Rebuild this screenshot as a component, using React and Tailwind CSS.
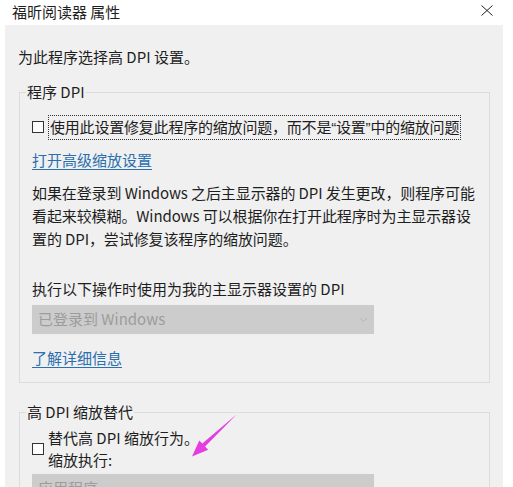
import React from "react";

const font = { fontFamily: '"Noto Sans CJK SC", "Noto Sans", sans-serif' };

// small greyed chevron used on the disabled dropdowns
const Chevron = () => (
  <svg width="9" height="6" viewBox="0 0 9 6" className="mr-[6px]">
    <path d="M1 1 L4.5 4.5 L8 1" fill="none" stroke="#b4b4b4" strokeWidth="1" />
  </svg>
);

const Select = ({ label, className = "" }) => (
  <div
    className={
      "w-[342px] h-[29px] bg-[#cccccc] flex items-center justify-between pl-[6px] text-[15px] text-[#9c9c9c] " +
      className
    }>
    <span>{label}</span>
    <Chevron />
  </div>
);

const CheckBox = () => (
  <span className="inline-block w-[12px] h-[12px] border border-[#333] bg-white shrink-0" />
);

const Group = ({ title, className = "", children }) => (
  <fieldset
    className={
      "w-[471px] ml-[14px] border border-[#dcdcdc] px-[12px] " + className
    }>
    <legend className="-ml-[6px] px-[1px] leading-[20px] text-[15px] text-[#1e1e1e]">
      {title}
    </legend>
    {children}
  </fieldset>
);

// curly quotes render half-width in the dialog font
const Q = ({ children }) => (
  <span style={{ fontFamily: '"Liberation Sans", sans-serif' }}>{children}</span>
);

export default function App() {
  return (
    <div
      className="relative w-[513px] h-[487px] bg-white overflow-hidden flex flex-col text-[#1e1e1e]"
      style={font}>
      {/* title bar */}
      <div className="h-[25px] flex items-center justify-between pl-[12px] pr-[20px] shrink-0">
        <span className="text-[15px] leading-[20px] -mt-[2px]">福昕阅读器 属性</span>
        <svg width="12" height="11" viewBox="0 0 12 11" className="-mt-[4px]">
          <path d="M0.5 0.5 L11.5 10.5 M11.5 0.5 L0.5 10.5" stroke="#222" strokeWidth="1" />
        </svg>
      </div>

      {/* dialog body */}
      <div className="ml-[5px] w-[498px] flex-1 bg-[#f0f0f0] pt-[21px]">
        <div className="pl-[13px] text-[15px] leading-[22px]">为此程序选择高 DPI 设置。</div>

        <Group title="程序 DPI" className="mt-[14px] pt-[13px] pb-[13px]">
          <div className="flex items-center h-[24px]">
            <CheckBox />
            <span className="ml-[4px] px-[1px] border border-dotted border-[#333] leading-[22px] text-[15px] whitespace-nowrap tracking-[-0.2px]">
              使用此设置修复此程序的缩放问题，而不是<Q>“</Q>设置<Q>”</Q>中的缩放问题
            </span>
          </div>
          <div className="mt-[10px] leading-[22px] text-[15px] text-[#2a6fae] underline underline-offset-[3px]">
            打开高级缩放设置
          </div>
          <p className="mt-[10px] leading-[23px] text-[15px] whitespace-nowrap tracking-[-0.1px]">
            如果在登录到 Windows 之后主显示器的 DPI 发生更改，则程序可能
            <br />
            看起来较模糊。Windows 可以根据你在打开此程序时为主显示器设
            <br />
            置的 DPI，尝试修复该程序的缩放问题。
          </p>
          <div className="mt-[28px] leading-[22px] text-[15px]">执行以下操作时使用为我的主显示器设置的 DPI</div>
          <Select label="已登录到 Windows" className="mt-[5px]" />
          <div className="mt-[13px] leading-[22px] text-[15px] text-[#2a6fae] underline underline-offset-[3px]">
            了解详细信息
          </div>
        </Group>

        <Group title="高 DPI 缩放替代" className="mt-[19px] pt-[5px] pb-[10px]">
          <div className="flex items-center">
            <CheckBox />
            <div className="ml-[4px] leading-[22px] text-[15px]">
              替代高 DPI 缩放行为。
              <br />
              缩放执行:
            </div>
          </div>
          <Select label="应用程序" className="mt-[3px]" />
        </Group>
      </div>

      {/* magenta pointer arrow */}
      <svg
        className="absolute left-0 top-0 pointer-events-none"
        width="513"
        height="487"
        viewBox="0 0 513 487">
        <polygon
          points="236.5,414.5 205.1,446.6 208.2,449.8 192,456.5 199.3,440.4 202.3,443.6"
          fill="#e53ee0"
        />
      </svg>
    </div>
  );
}
